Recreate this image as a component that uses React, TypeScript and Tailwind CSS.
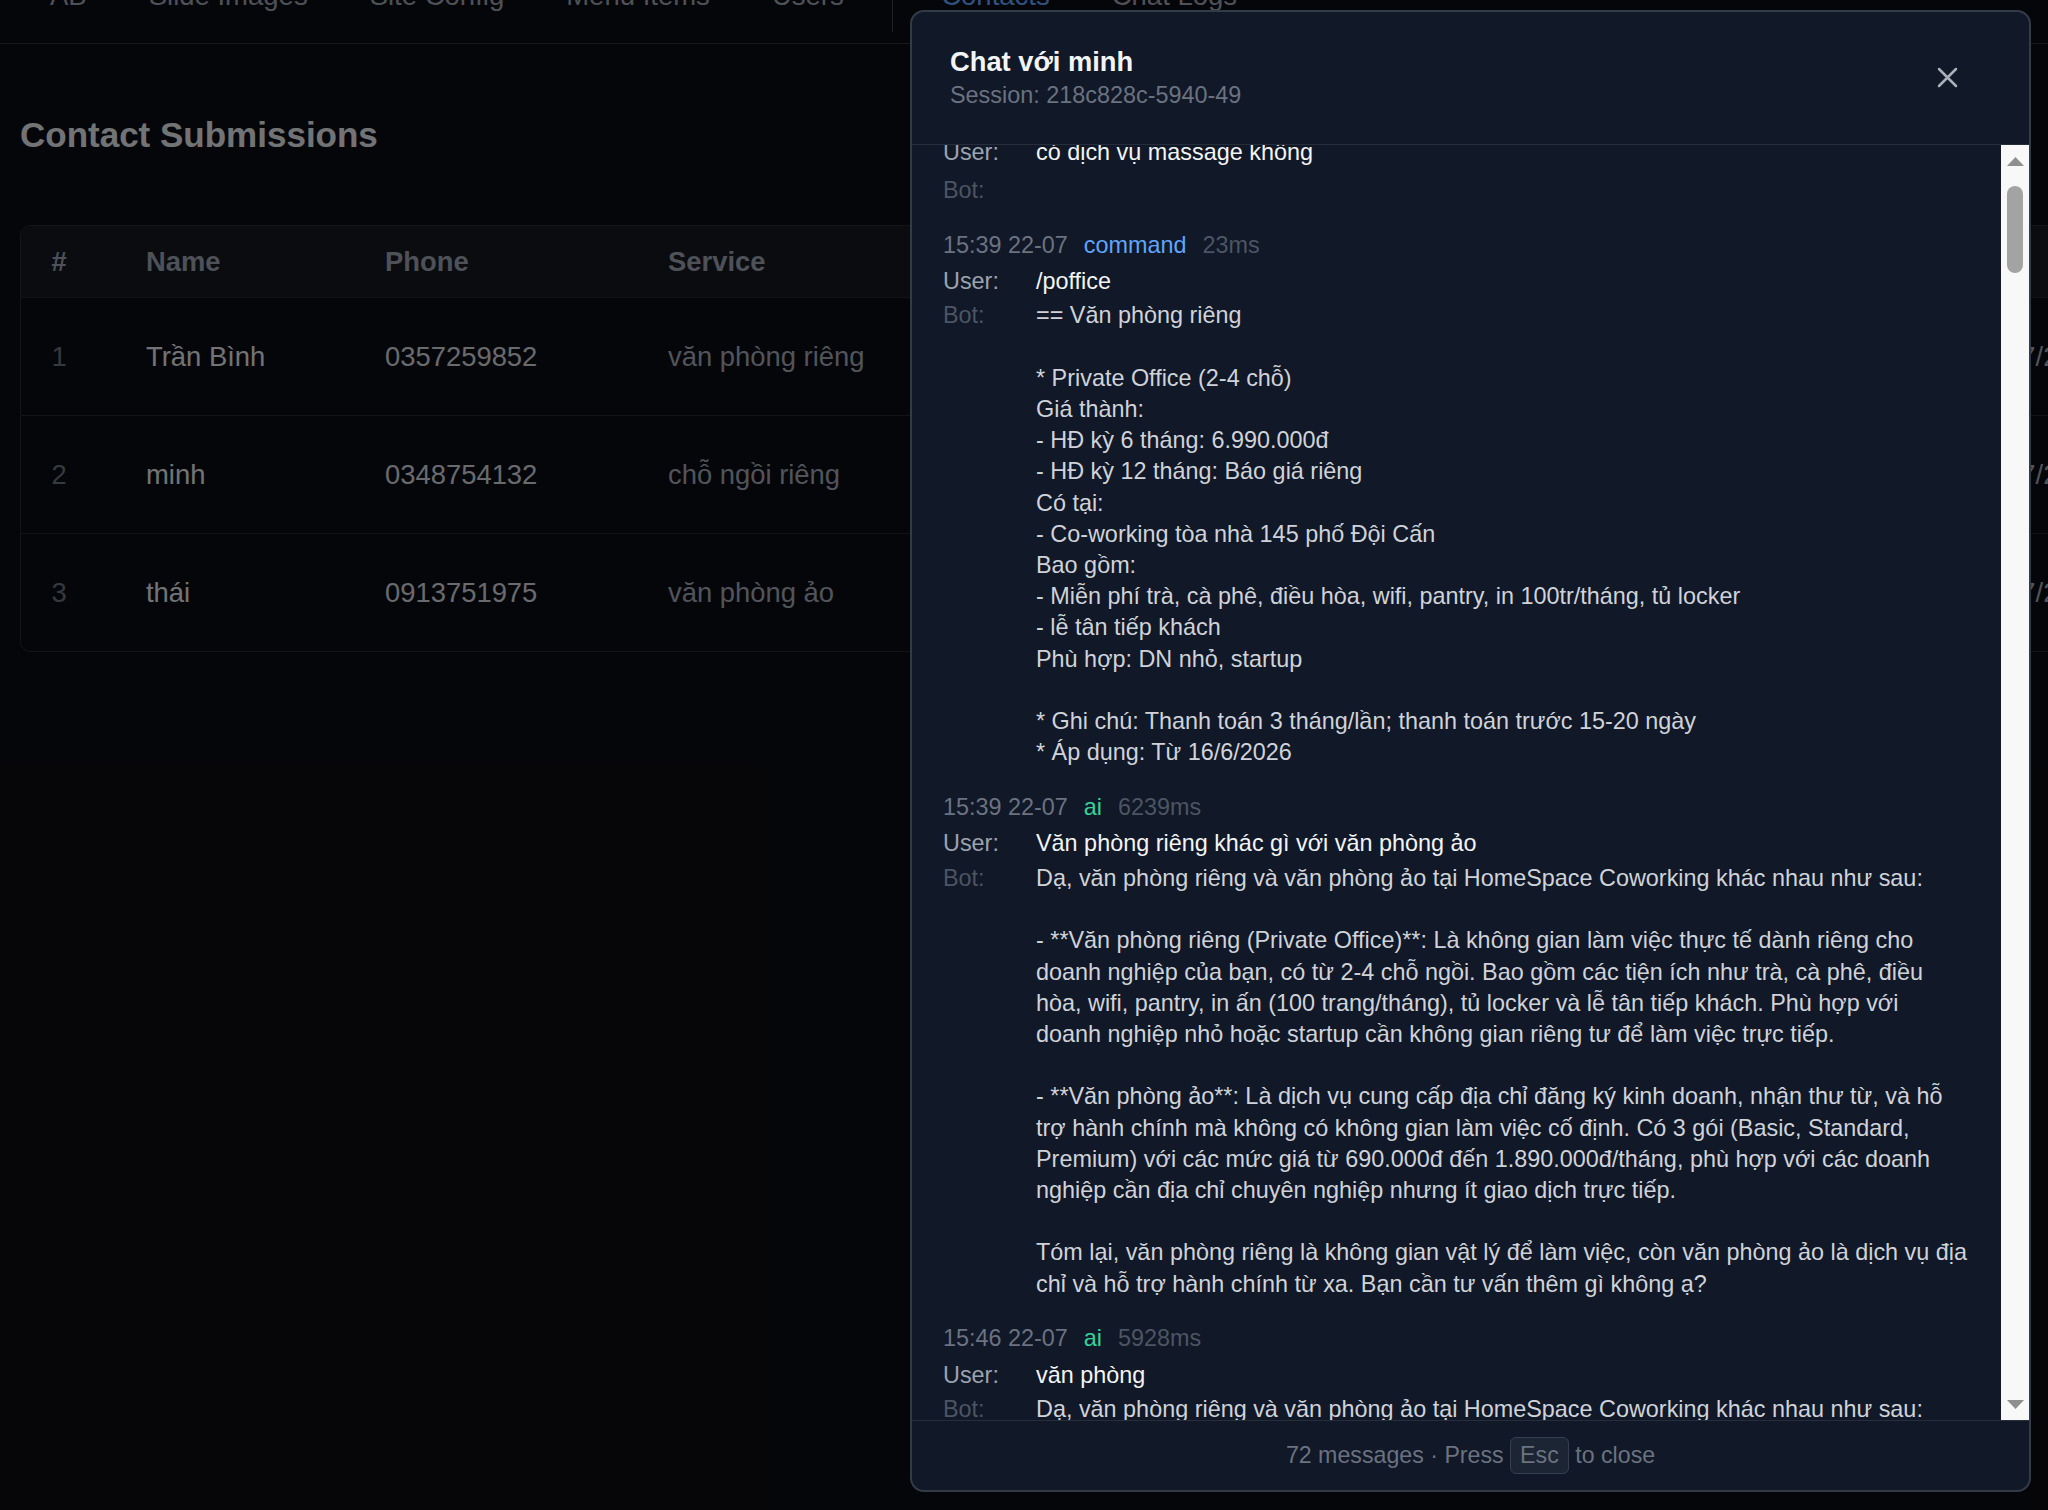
import React from "react";

type Block = {
  time?: string;
  kind?: "command" | "ai";
  ms?: string;
  user: string;
  bot: string;
};

const blocks: Block[] = [
  { user: "có dịch vụ massage không", bot: "" },
  {
    time: "15:39 22-07",
    kind: "command",
    ms: "23ms",
    user: "/poffice",
    bot: `== Văn phòng riêng

* Private Office (2-4 chỗ)
Giá thành:
- HĐ kỳ 6 tháng: 6.990.000đ
- HĐ kỳ 12 tháng: Báo giá riêng
Có tại:
- Co-working tòa nhà 145 phố Đội Cấn
Bao gồm:
- Miễn phí trà, cà phê, điều hòa, wifi, pantry, in 100tr/tháng, tủ locker
- lễ tân tiếp khách
Phù hợp: DN nhỏ, startup

* Ghi chú: Thanh toán 3 tháng/lần; thanh toán trước 15-20 ngày
* Áp dụng: Từ 16/6/2026`,
  },
  {
    time: "15:39 22-07",
    kind: "ai",
    ms: "6239ms",
    user: "Văn phòng riêng khác gì với văn phòng ảo",
    bot: `Dạ, văn phòng riêng và văn phòng ảo tại HomeSpace Coworking khác nhau như sau:

- **Văn phòng riêng (Private Office)**: Là không gian làm việc thực tế dành riêng cho
doanh nghiệp của bạn, có từ 2-4 chỗ ngồi. Bao gồm các tiện ích như trà, cà phê, điều
hòa, wifi, pantry, in ấn (100 trang/tháng), tủ locker và lễ tân tiếp khách. Phù hợp với
doanh nghiệp nhỏ hoặc startup cần không gian riêng tư để làm việc trực tiếp.

- **Văn phòng ảo**: Là dịch vụ cung cấp địa chỉ đăng ký kinh doanh, nhận thư từ, và hỗ
trợ hành chính mà không có không gian làm việc cố định. Có 3 gói (Basic, Standard,
Premium) với các mức giá từ 690.000đ đến 1.890.000đ/tháng, phù hợp với các doanh
nghiệp cần địa chỉ chuyên nghiệp nhưng ít giao dịch trực tiếp.

Tóm lại, văn phòng riêng là không gian vật lý để làm việc, còn văn phòng ảo là dịch vụ địa
chỉ và hỗ trợ hành chính từ xa. Bạn cần tư vấn thêm gì không ạ?`,
  },
  {
    time: "15:46 22-07",
    kind: "ai",
    ms: "5928ms",
    user: "văn phòng",
    bot: `Dạ, văn phòng riêng và văn phòng ảo tại HomeSpace Coworking khác nhau như sau:

- **Văn phòng riêng (Private Office)**: Là không gian làm việc thực tế dành riêng cho`,
  },
];

const rows = [
  { n: "1", name: "Trần Bình", phone: "0357259852", service: "văn phòng riêng", msg: "Tư vấn văn phòng", email: "—", date: "22/07/2025 15:12" },
  { n: "2", name: "minh", phone: "0348754132", service: "chỗ ngồi riêng", msg: "Hỏi giá chỗ ngồi", email: "—", date: "22/07/2025 15:40" },
  { n: "3", name: "thái", phone: "0913751975", service: "văn phòng ảo", msg: "Đăng ký văn phòng ảo", email: "—", date: "22/07/2025 16:02" },
];

function MessageBlock({ b, first }: { b: Block; first: boolean }) {
  return (
    <div className={first ? "" : "mt-[23.6px]"}>
      {b.time && (
        <div className="flex gap-[16px] mb-[5px]">
          <span className="text-[#6b7280]">{b.time}</span>
          <span className={b.kind === "command" ? "text-[#60a5fa]" : "text-[#34d399]"}>{b.kind}</span>
          <span className="text-[#4b5563]">{b.ms}</span>
        </div>
      )}
      <div className={`grid grid-cols-[93px_1fr] ${first ? "mb-[6.5px]" : "mb-[3.5px]"}`}>
        <span className="text-[#9ca3af]">User:</span>
        <span className="text-[#f3f4f6] whitespace-pre">{b.user}</span>
      </div>
      <div className="grid grid-cols-[93px_1fr]">
        <span className="text-[#4b5563]">Bot:</span>
        <span className="text-[#cfd3d9] whitespace-pre">{b.bot}</span>
      </div>
    </div>
  );
}

function ScrollBar() {
  return (
    <div className="w-[28px] shrink-0 bg-[#f8f8f9] flex flex-col items-center">
      <div className="h-[28px] w-full flex items-center justify-center pt-[4px]">
        <svg width="17" height="9" viewBox="0 0 17 9">
          <polygon points="8.5,0 17,9 0,9" fill="#8f8f8f" />
        </svg>
      </div>
      <div className="mt-[13px] h-[87px] w-[16.5px] rounded-full bg-[#a3a3a3]" />
      <div className="flex-1" />
      <div className="h-[28px] w-full flex items-center justify-center pb-[4px]">
        <svg width="17" height="9" viewBox="0 0 17 9">
          <polygon points="0,0 17,0 8.5,9" fill="#8f8f8f" />
        </svg>
      </div>
    </div>
  );
}

export default function App() {
  const cols = "grid grid-cols-[125px_239px_283px_420px_500px_379px_260px]";
  return (
    <div className="relative w-[2048px] h-[1510px] overflow-hidden bg-[#0b0c12] font-['Liberation_Sans',Arial,sans-serif]">
      {/* top navigation (page scrolled slightly) */}
      <div className="flex items-start h-[44px] border-b-[1.5px] border-[#2e333e]">
        <div className="flex items-start -mt-[19px] pl-[19px] text-[27.5px] leading-[30px] text-[#9ca3af]">
          <span className="px-[31px]">AB</span>
          <span className="px-[31px]">Slide Images</span>
          <span className="px-[31px]">Site Config</span>
          <span className="px-[31px]">Menu Items</span>
          <span className="px-[31px]">Users</span>
          <span className="mx-[17px] w-[1.5px] h-[51px] bg-[#3b404b]" />
          <span className="px-[31px] text-[#60a5fa]">Contacts</span>
          <span className="px-[31px]">Chat Logs</span>
        </div>
      </div>

      {/* main content */}
      <div className="px-[20px]">
        <h1 className="mt-[70.5px] mb-[70.5px] text-[35px] leading-[40px] font-bold text-[#e5e7eb]">
          Contact Submissions
        </h1>
        <div className="w-[2240px] rounded-[10px] border-[1.5px] border-[#262a34] overflow-hidden">
          <div className={`${cols} h-[71px] items-center bg-[#141821] text-[27.4px] font-bold text-[#9ca3af]`}>
            <span className="pl-[30.5px]">#</span>
            <span>Name</span>
            <span>Phone</span>
            <span>Service</span>
            <span>Message</span>
            <span>Email</span>
            <span>Date</span>
          </div>
          {rows.map((r) => (
            <div
              key={r.n}
              className={`${cols} h-[118px] items-center border-t-[1.5px] border-[#23272f] text-[27.4px]`}
            >
              <span className="pl-[30.5px] text-[#6b7280]">{r.n}</span>
              <span className="text-[#e5e7eb]">{r.name}</span>
              <span className="text-[#d1d5db]">{r.phone}</span>
              <span className="text-[#a3a9b5]">{r.service}</span>
              <span className="text-[#a3a9b5]">{r.msg}</span>
              <span className="text-[#a3a9b5]">{r.email}</span>
              <span className="text-[#a3a9b5] whitespace-nowrap">{r.date}</span>
            </div>
          ))}
        </div>
      </div>

      {/* overlay */}
      <div className="absolute inset-0 bg-black/50" />

      {/* modal */}
      <div className="absolute left-[910px] top-[10px] w-[1121px] h-[1482px] rounded-[14px] border-2 border-[#343b48] bg-[#111827] overflow-hidden flex flex-col">
        <div className="flex items-center justify-between pl-[38px] pr-[71px] py-[33.5px] border-b border-[#262d3b]">
          <div>
            <div className="text-[27.3px] leading-[32px] font-bold text-[#f3f4f6]">Chat với minh</div>
            <div className="mt-[2px] text-[23.4px] leading-[31px] text-[#6b7280]">Session: 218c828c-5940-49</div>
          </div>
          <button className="w-[21px] h-[21px] -mt-[2px]" aria-label="Close">
            <svg width="21" height="21" viewBox="0 0 21 21">
              <path d="M2 2 L19 19 M19 2 L2 19" stroke="#aab0ba" strokeWidth="2.5" strokeLinecap="round" />
            </svg>
          </button>
        </div>

        <div className="flex-1 min-h-0 flex">
          <div className="flex-1 min-w-0 overflow-hidden px-[31px] text-[23.4px] leading-[31.2px]">
            <div className="-mt-[8px]">
              {blocks.map((b, i) => (
                <MessageBlock key={i} b={b} first={i === 0} />
              ))}
            </div>
          </div>
          <ScrollBar />
        </div>

        <div className="h-[70px] shrink-0 border-t border-[#262d3b] flex items-center justify-center text-[23.2px] text-[#6b7280] whitespace-pre">
          <span>72 messages · Press </span>
          <kbd className="inline-flex items-center h-[37px] px-[9px] rounded-[6px] border-[1.5px] border-[#334052] bg-[#1c2533] text-[#6b7280] font-['Liberation_Sans',Arial,sans-serif]">
            Esc
          </kbd>
          <span> to close</span>
        </div>
      </div>
    </div>
  );
}
